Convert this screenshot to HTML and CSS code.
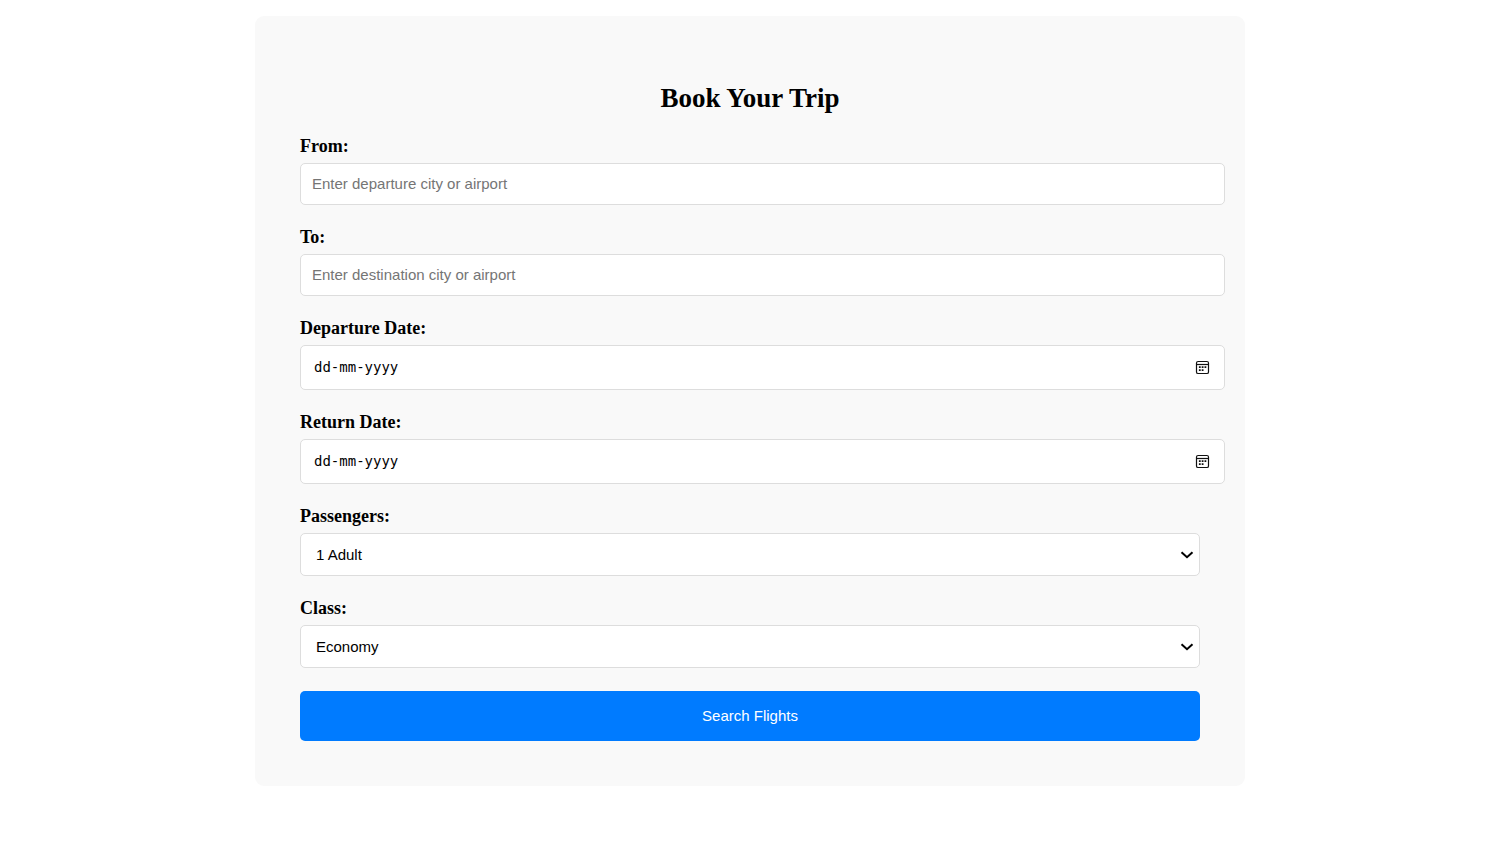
FILE: index.html
```html
<!DOCTYPE html>
<html lang="en">
<head>
<meta charset="utf-8">
<meta name="viewport" content="width=device-width, initial-scale=1">
<title>Book Your Trip</title>
<link rel="stylesheet" href="styles.css">
</head>
<body>
<main class="card">
  <h2 class="title">Book Your Trip</h2>
  <form class="form">
    <div class="group">
      <label class="label" for="from">From:</label>
      <input class="control text" type="text" id="from" placeholder="Enter departure city or airport">
    </div>
    <div class="group">
      <label class="label" for="to">To:</label>
      <input class="control text" type="text" id="to" placeholder="Enter destination city or airport">
    </div>
    <div class="group">
      <label class="label" for="depart">Departure Date:</label>
      <div class="control date">
        <input class="date-input" type="text" id="depart" placeholder="dd-mm-yyyy">
        <button class="picker" type="button" aria-label="Choose departure date">
          <svg class="icon" viewBox="0 0 15 15"><rect x="1.5" y="1.5" width="12" height="12" rx="1.6" fill="none" stroke="#111" stroke-width="1.2"/><path d="M1.5 4.5h12" stroke="#111" stroke-width="1.2"/><path d="M3.9 6.3h1.8v1.8H3.9zM6.7 6.3h1.8v1.8H6.7zM9.5 6.3h1.8v1.8H9.5zM3.9 9.3h1.8v1.8H3.9zM6.7 9.3h1.8v1.8H6.7z" fill="#111"/></svg>
        </button>
      </div>
    </div>
    <div class="group">
      <label class="label" for="return">Return Date:</label>
      <div class="control date">
        <input class="date-input" type="text" id="return" placeholder="dd-mm-yyyy">
        <button class="picker" type="button" aria-label="Choose return date">
          <svg class="icon" viewBox="0 0 15 15"><rect x="1.5" y="1.5" width="12" height="12" rx="1.6" fill="none" stroke="#111" stroke-width="1.2"/><path d="M1.5 4.5h12" stroke="#111" stroke-width="1.2"/><path d="M3.9 6.3h1.8v1.8H3.9zM6.7 6.3h1.8v1.8H6.7zM9.5 6.3h1.8v1.8H9.5zM3.9 9.3h1.8v1.8H3.9zM6.7 9.3h1.8v1.8H6.7z" fill="#111"/></svg>
        </button>
      </div>
    </div>
    <div class="group">
      <label class="label" for="passengers">Passengers:</label>
      <div class="select-wrap">
        <select class="control select" id="passengers"><option>1 Adult</option><option>2 Adults</option></select>
        <svg class="chevron" viewBox="0 0 14 8"><path d="M1.5 1.2 7 6.2l5.5-5" fill="none" stroke="#000" stroke-width="2"/></svg>
      </div>
    </div>
    <div class="group">
      <label class="label" for="class">Class:</label>
      <div class="select-wrap">
        <select class="control select" id="class"><option>Economy</option><option>Business</option></select>
        <svg class="chevron" viewBox="0 0 14 8"><path d="M1.5 1.2 7 6.2l5.5-5" fill="none" stroke="#000" stroke-width="2"/></svg>
      </div>
    </div>
    <button class="submit" type="submit">Search Flights</button>
  </form>
</main>
</body>
</html>
```
FILE: styles.css
```css
* { box-sizing: border-box; }

body {
  margin: 16px 17px 16px 16px;
  background: #fff;
  color: #000;
  font-family: "Liberation Serif", "Times New Roman", serif;
}

.card {
  max-width: 990px;
  margin: 0 auto;
  padding: 45px;
  background: #f9f9f9;
  border-radius: 9px;
}

.title {
  margin: 22px 0 23px;
  font-size: 27px;
  line-height: 31px;
  text-align: center;
}

.form {
  display: flex;
  flex-direction: column;
  gap: 23px;
}

.group {
  display: flex;
  flex-direction: column;
  gap: 7px;
}

.label {
  font-size: 18px;
  font-weight: bold;
  line-height: 19px;
}

.control {
  width: 100%;
  border: 1px solid #ddd;
  border-radius: 5px;
  background: #fff;
  color: #000;
  font-family: "Liberation Sans", Arial, sans-serif;
  font-size: 15px;
  line-height: 19px;
}

.text,
.date {
  width: calc(100% + 25px);
}

.text {
  padding: 11px;
  line-height: 18px;
}

.text::placeholder {
  color: #757575;
}

.date {
  display: flex;
  align-items: center;
  padding: 12px 14px 12px 13px;
}

.date-input {
  flex: 1;
  min-width: 0;
  padding: 0;
  border: 0;
  background: none;
  color: #000;
  font-family: "DejaVu Sans Mono", monospace;
  font-size: 14px;
  line-height: 19px;
}

.date-input::placeholder {
  color: #000;
  opacity: 1;
}

.picker {
  display: flex;
  padding: 0;
  border: 0;
  background: none;
}

.icon {
  width: 15px;
  height: 15px;
}

.select-wrap {
  display: grid;
  align-items: center;
}

.select-wrap > * {
  grid-area: 1 / 1;
}

.select {
  appearance: none;
  padding: 11px 32px 11px 15px;
}

.chevron {
  justify-self: end;
  width: 14px;
  height: 8px;
  margin-right: 6px;
  pointer-events: none;
}

.submit {
  padding: 15px;
  border: 0;
  border-radius: 5px;
  background: #007bff;
  color: #fff;
  font-family: "Liberation Sans", Arial, sans-serif;
  font-size: 15px;
  line-height: 20px;
}
```
